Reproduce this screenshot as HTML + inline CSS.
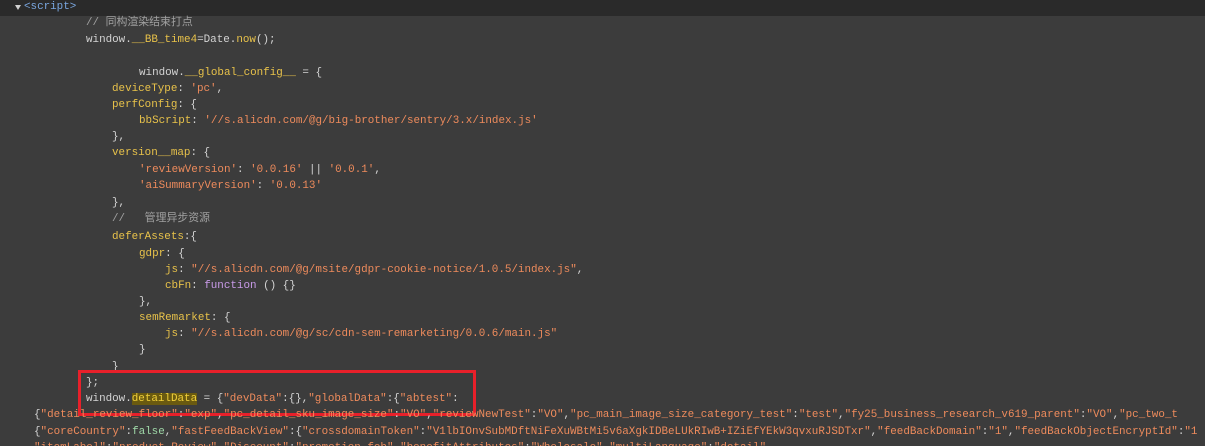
<!DOCTYPE html>
<html><head><meta charset="utf-8"><style>
html,body{margin:0;padding:0;width:1205px;height:446px;overflow:hidden;background:#3c3c3c;}
#w{position:relative;width:1205px;height:446px;overflow:hidden;}
.top{position:absolute;left:0;top:0;width:1205px;height:16px;background:#2a2a2a;}
.l{position:absolute;white-space:pre;font-family:"Liberation Mono","Noto Sans CJK SC",monospace;font-size:10.9px;line-height:16px;color:#d4d4d4;}
.k{color:#e8c24a}.s{color:#ee8b5c}.c{color:#a0a0a0}.t{color:#7aa7e0}.f{color:#c89ae8}.g{color:#9fd8a8}
.hl{background:#6a5a10;color:#f0cf3a}
.box{position:absolute;left:78px;top:370px;width:392px;height:40px;border:3px solid #e8202a;}
.tri{position:absolute;left:15px;top:5px;width:0;height:0;border-left:3.5px solid transparent;border-right:3.5px solid transparent;border-top:5px solid #d0d0d0;}
</style></head><body><div id="w">
<div class="top"></div>
<div class="tri"></div>
<div class="l t" style="left:24px;top:-1px">&lt;script&gt;</div>
<div class="l c" style="left:86px;top:15px">// 同构渲染结束打点</div>
<div class="l" style="left:86px;top:32px">window.<span class="k">__BB_time4</span>=Date.<span class="k">now</span>();</div>
<div class="l" style="left:139px;top:65px">window.<span class="k">__global_config__</span> = {</div>
<div class="l" style="left:112px;top:81px"><span class="k">deviceType</span>: <span class="s">'pc'</span>,</div>
<div class="l" style="left:112px;top:97px"><span class="k">perfConfig</span>: {</div>
<div class="l" style="left:139px;top:113px"><span class="k">bbScript</span>: <span class="s">'//s.alicdn.com/@g/big-brother/sentry/3.x/index.js'</span></div>
<div class="l" style="left:112px;top:129px">},</div>
<div class="l" style="left:112px;top:145px"><span class="k">version__map</span>: {</div>
<div class="l" style="left:139px;top:162px"><span class="s">'reviewVersion'</span>: <span class="s">'0.0.16'</span> || <span class="s">'0.0.1'</span>,</div>
<div class="l" style="left:139px;top:178px"><span class="s">'aiSummaryVersion'</span>: <span class="s">'0.0.13'</span></div>
<div class="l" style="left:112px;top:195px">},</div>
<div class="l c" style="left:112px;top:211px">//   管理异步资源</div>
<div class="l" style="left:112px;top:229px"><span class="k">deferAssets</span>:{</div>
<div class="l" style="left:139px;top:246px"><span class="k">gdpr</span>: {</div>
<div class="l" style="left:165px;top:262px"><span class="k">js</span>: <span class="s">"//s.alicdn.com/@g/msite/gdpr-cookie-notice/1.0.5/index.js"</span>,</div>
<div class="l" style="left:165px;top:278px"><span class="k">cbFn</span>: <span class="f">function</span> () {}</div>
<div class="l" style="left:139px;top:294px">},</div>
<div class="l" style="left:139px;top:310px"><span class="k">semRemarket</span>: {</div>
<div class="l" style="left:165px;top:326px"><span class="k">js</span>: <span class="s">"//s.alicdn.com/@g/sc/cdn-sem-remarketing/0.0.6/main.js"</span></div>
<div class="l" style="left:139px;top:342px">}</div>
<div class="l" style="left:112px;top:359px">}</div>
<div class="l" style="left:86px;top:375px">};</div>
<div class="l" style="left:86px;top:391px">window.<span class="hl">detailData</span> = {<span class="s">"devData"</span>:{},<span class="s">"globalData"</span>:{<span class="s">"abtest"</span>:</div>
<div class="box"></div>
<div class="l" style="left:34px;top:407px">{<span class="s">"detail_review_floor"</span>:<span class="s">"exp"</span>,<span class="s">"pc_detail_sku_image_size"</span>:<span class="s">"VO"</span>,<span class="s">"reviewNewTest"</span>:<span class="s">"VO"</span>,<span class="s">"pc_main_image_size_category_test"</span>:<span class="s">"test"</span>,<span class="s">"fy25_business_research_v619_parent"</span>:<span class="s">"VO"</span>,<span class="s">"pc_two_t</span></div>
<div class="l" style="left:34px;top:424px">{<span class="s">"coreCountry"</span>:<span class="g">false</span>,<span class="s">"fastFeedBackView"</span>:{<span class="s">"crossdomainToken"</span>:<span class="s">"V1lbIOnvSubMDftNiFeXuWBtMi5v6aXgkIDBeLUkRIwB+IZiEfYEkW3qvxuRJSDTxr"</span>,<span class="s">"feedBackDomain"</span>:<span class="s">"1"</span>,<span class="s">"feedBackObjectEncryptId"</span>:<span class="s">"1</span></div>
<div class="l" style="left:34px;top:440px"><span class="s">"itemLabel"</span>:<span class="s">"product Review"</span>,<span class="s">"Discount"</span>:<span class="s">"promotion fob"</span>,<span class="s">"benefitAttributes"</span>:<span class="s">"Wholesale"</span>,<span class="s">"multiLanguage"</span>:<span class="s">"detail"</span></div>
</div></body></html>
